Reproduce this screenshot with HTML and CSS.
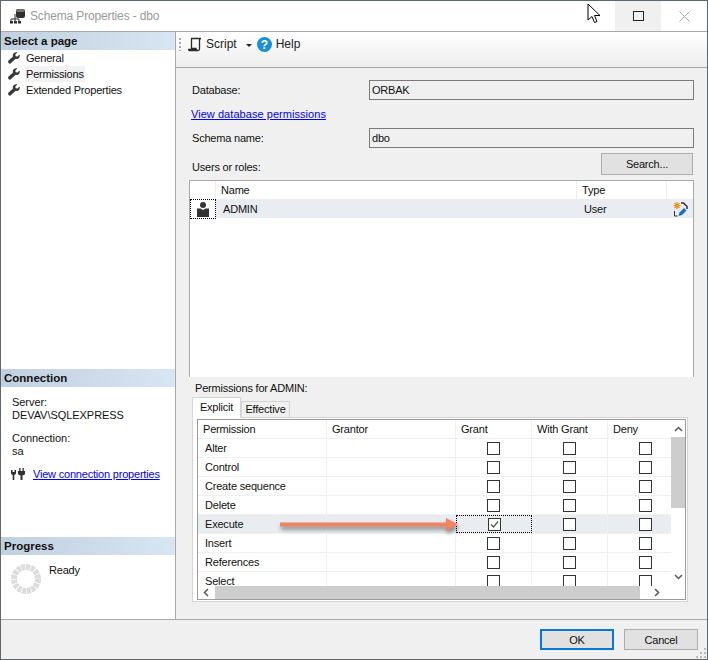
FILE: index.html
```html
<!DOCTYPE html>
<html lang="en">
<head>
<meta charset="utf-8">
<title>Schema Properties - dbo</title>
<link rel="stylesheet" href="styles.css">
</head>
<body>
<svg width="0" height="0" class="defs">
  <symbol id="wrench" viewBox="0 0 12 12"><path d="M11.6 2.6 9.4 4.6 7.7 4.2 7.3 2.5 9.4.4C7.6-.2 5.6.6 5 2.2c-.3.8-.3 1.6 0 2.2L.6 8.6c-.7.7-.7 1.8 0 2.5s1.8.7 2.5 0L7.400 6.900c.8.3 1.700.3 2.500-.1 1.500-.7 2.200-2.500 1.700-4.200z" fill="#3a3a3a"/></symbol>
  <symbol id="box" viewBox="0 0 13 13"><rect x=".5" y=".5" width="12" height="12" fill="#fff" stroke="#333"/></symbol>
</svg>
<div class="window">
  <header class="titlebar">
    <svg class="appicon" width="16" height="16" viewBox="0 0 16 16"><rect x="6" y="1" width="9" height="9" rx="2" fill="#2f2f2f"/><ellipse cx="10.500" cy="2.500" rx="4.500" ry="1.600" fill="#777"/><path d="M5 6v3M1 11h8M1 11v2M5 9v4M9 11v2" stroke="#2f2f2f" fill="none"/><rect x="0" y="13" width="3" height="2.500" fill="#2f2f2f"/><rect x="4" y="13" width="3" height="2.500" fill="#2f2f2f"/><rect x="8" y="13" width="3" height="2.500" fill="#2f2f2f"/></svg>
    <span class="title">Schema Properties - dbo</span>
    <div class="winbtns">
      <div class="winbtn hover"><span class="maxbox"></span></div>
      <div class="winbtn"><svg width="11" height="11" viewBox="0 0 11 11"><path d="M.5.5l10 10M10.500.5l-10 10" stroke="#a8a8a8" fill="none"/></svg></div>
    </div>
  </header>
  <div class="main">
    <aside class="sidebar">
      <section class="pages">
        <h2 class="panel-head">Select a page</h2>
        <ul class="pagelist">
          <li class="pageitem"><svg class="wrench"><use href="#wrench"/></svg><span>General</span></li>
          <li class="pageitem"><svg class="wrench"><use href="#wrench"/></svg><span class="selected">Permissions</span></li>
          <li class="pageitem"><svg class="wrench"><use href="#wrench"/></svg><span>Extended Properties</span></li>
        </ul>
      </section>
      <section class="connection">
        <h2 class="panel-head">Connection</h2>
        <div class="conn-body">
          <p class="conn-text">Server:</p>
          <p class="conn-text">DEVAV\SQLEXPRESS</p>
          <p class="conn-text conn-second">Connection:</p>
          <p class="conn-text">sa</p>
          <div class="conn-link">
            <svg class="plug" width="14" height="12" viewBox="0 0 14 12"><path d="M0 2h1.500v2h2V2H5v3c0 1-.8 1.800-1.700 1.800V12H1.700V6.800C.8 6.800 0 6 0 5z" fill="#2f2f2f"/><path d="M7 3h7v2.500c0 1-1 1.800-2.500 1.800V12H9.500V7.300C8 7.300 7 6.500 7 5.500zM8.200 0h1.300v3H8.200zM11.500 0h1.300v3h-1.300z" fill="#2f2f2f"/></svg>
            <a href="#">View connection properties</a>
          </div>
        </div>
      </section>
      <section class="progress">
        <h2 class="panel-head">Progress</h2>
        <div class="progress-body">
          <svg width="30" height="30" viewBox="0 0 30 30"><circle cx="15" cy="15" r="12" fill="none" stroke="#dcdcdc" stroke-width="6" stroke-dasharray="3.900 .8"/></svg>
          <span>Ready</span>
        </div>
      </section>
    </aside>
    <div class="pane">
      <div class="toolbar">
        <span class="grip"></span>
        <svg class="tool-script" width="14" height="15" viewBox="0 0 14 15"><path d="M3.500 1.500h9.500c-1 0-1.500.7-1.500 1.500v9c0 1-.8 1.500-1.500 1.500H1.500c-.7 0-1-.5-1-1h8c0-.8 0-1 .2-1H3.500z" fill="none" stroke="#2b2b2b" stroke-width="1.300"/></svg>
        <span class="tool-label">Script</span>
        <span class="caret"></span>
        <svg class="tool-help" width="15" height="15" viewBox="0 0 15 15"><circle cx="7.500" cy="7.500" r="7.500" fill="#1a8fd8"/><text x="7.500" y="12" class="helpq" text-anchor="middle">?</text></svg>
        <span class="tool-label">Help</span>
      </div>
      <div class="content">
        <div class="field first">
          <label class="field-label">Database:</label>
          <div class="readonly">ORBAK</div>
        </div>
        <a class="dblink" href="#">View database permissions</a>
        <div class="field">
          <label class="field-label">Schema name:</label>
          <div class="readonly">dbo</div>
        </div>
        <div class="users-row">
          <span>Users or roles:</span>
          <button class="btn search">Search...</button>
        </div>
        <div class="users">
          <div class="users-head">
            <span class="u0"></span><span class="u1">Name</span><span class="u2">Type</span><span class="u3"></span>
          </div>
          <div class="users-row-data">
            <span class="u0 focus-cell">
              <svg width="12" height="15" viewBox="0 0 12 15"><circle cx="6" cy="3" r="3" fill="#333"/><path d="M0 6.500h3.500L6 8l2.500-1.500H12V15H0z" fill="#333"/></svg>
            </span>
            <span class="u1 indent">ADMIN</span>
            <span class="u2 indent">User</span>
            <span class="u3 iconcell">
              <svg width="15" height="15" viewBox="0 0 15 15"><path d="M8 1h2.500L14 4.500V7" fill="none" stroke="#333" stroke-width="1.500"/><path d="M1.500 9v5h3" fill="none" stroke="#333"/><path d="M5.500 14l1-3.500 4.500-4.500 2.500 2.500-4.500 4.500z" fill="#1d6fc4"/><path d="M4 0v7M.5 3.500h7M1.500 1l5 5M6.500 1l-5 5" stroke="#e8921e" stroke-width="1.200"/></svg>
            </span>
          </div>
        </div>
        <div class="perm-label">Permissions for ADMIN:</div>
        <div class="tabs">
          <span class="tab active">Explicit</span>
          <span class="tab">Effective</span>
        </div>
        <div class="tabpanel">
          <div class="grid-frame">
            <div class="grid-top">
              <div class="grid-clip">
                <div class="g-row g-head"><span>Permission</span><span>Grantor</span><span>Grant</span><span>With Grant</span><span>Deny</span></div>
                <div class="g-row"><span class="g-name">Alter</span><span></span><span class="g-c"><svg class="box"><use href="#box"/></svg></span><span class="g-c"><svg class="box"><use href="#box"/></svg></span><span class="g-c"><svg class="box"><use href="#box"/></svg></span></div>
                <div class="g-row"><span class="g-name">Control</span><span></span><span class="g-c"><svg class="box"><use href="#box"/></svg></span><span class="g-c"><svg class="box"><use href="#box"/></svg></span><span class="g-c"><svg class="box"><use href="#box"/></svg></span></div>
                <div class="g-row"><span class="g-name">Create sequence</span><span></span><span class="g-c"><svg class="box"><use href="#box"/></svg></span><span class="g-c"><svg class="box"><use href="#box"/></svg></span><span class="g-c"><svg class="box"><use href="#box"/></svg></span></div>
                <div class="g-row"><span class="g-name">Delete</span><span></span><span class="g-c"><svg class="box"><use href="#box"/></svg></span><span class="g-c"><svg class="box"><use href="#box"/></svg></span><span class="g-c"><svg class="box"><use href="#box"/></svg></span></div>
                <div class="g-row g-sel"><span class="g-name">Execute</span><span></span><span class="g-c g-focus"><svg class="box" viewBox="0 0 13 13"><rect x=".5" y=".5" width="12" height="12" fill="#fff" stroke="#333"/><path d="M3 6.500l2.500 2.500L10 3.500" fill="none" stroke="#555" stroke-width="1.200"/></svg></span><span class="g-c"><svg class="box"><use href="#box"/></svg></span><span class="g-c"><svg class="box"><use href="#box"/></svg></span></div>
                <div class="g-row"><span class="g-name">Insert</span><span></span><span class="g-c"><svg class="box"><use href="#box"/></svg></span><span class="g-c"><svg class="box"><use href="#box"/></svg></span><span class="g-c"><svg class="box"><use href="#box"/></svg></span></div>
                <div class="g-row"><span class="g-name">References</span><span></span><span class="g-c"><svg class="box"><use href="#box"/></svg></span><span class="g-c"><svg class="box"><use href="#box"/></svg></span><span class="g-c"><svg class="box"><use href="#box"/></svg></span></div>
                <div class="g-row"><span class="g-name">Select</span><span></span><span class="g-c"><svg class="box"><use href="#box"/></svg></span><span class="g-c"><svg class="box"><use href="#box"/></svg></span><span class="g-c"><svg class="box"><use href="#box"/></svg></span></div>
              </div>
              <div class="vscroll">
                <svg class="sb-arrow" width="9" height="6" viewBox="0 0 9 6"><path d="M1 5l3.500-3.500L8 5" fill="none" stroke="#555" stroke-width="1.500"/></svg>
                <div class="v-thumb"></div>
                <svg class="sb-arrow" width="9" height="6" viewBox="0 0 9 6"><path d="M1 1l3.500 3.500L8 1" fill="none" stroke="#555" stroke-width="1.500"/></svg>
              </div>
            </div>
            <div class="hscroll">
              <svg class="sb-arrow" width="6" height="9" viewBox="0 0 6 9"><path d="M5 1L1.500 4.500 5 8" fill="none" stroke="#555" stroke-width="1.500"/></svg>
              <div class="h-thumb"></div>
              <svg class="sb-arrow" width="6" height="9" viewBox="0 0 6 9"><path d="M1 1l3.500 3.500L1 8" fill="none" stroke="#555" stroke-width="1.500"/></svg>
              <span class="h-corner"></span>
            </div>
          </div>
        </div>
      </div>
    </div>
  </div>
  <footer class="footer">
    <button class="btn primary">OK</button>
    <button class="btn cancel">Cancel</button>
    <svg class="sizegrip" width="11" height="11" viewBox="0 0 11 11"><path d="M8 0h2v2H8zM4 4h2v2H4zM8 4h2v2H8zM0 8h2v2H0zM4 8h2v2H4zM8 8h2v2H8z" fill="#b8b8b8"/></svg>
  </footer>
  <svg class="annot-arrow" width="178" height="13" viewBox="0 0 178 13"><path d="M0 4.500h166V0l12 6.500-12 6.500V8.500H0z" fill="#f08360"/></svg>
  <svg class="cursor" width="14" height="21" viewBox="0 0 14 21"><path d="M1 1v16l4-3.500 2.500 6 2.500-1-2.500-6H13z" fill="#fff" stroke="#000"/></svg>
</div>
</body>
</html>
```
FILE: styles.css
```css
* { box-sizing: border-box; }
html, body { margin: 0; padding: 0; }
body { width: 708px; height: 660px; overflow: hidden; font-family: "Liberation Sans", Arial, sans-serif; font-size: 11px; letter-spacing: -.2px; line-height: 16px; color: #111; }
.defs { position: absolute; }
a { color: #0000ee; text-decoration: underline; white-space: nowrap; }
.window { position: relative; width: 708px; height: 660px; display: flex; flex-direction: column; background: #f0f0f0; border: 1px solid #5f666c; }

.titlebar { flex: 0 0 30px; display: flex; align-items: center; background: #fff; padding-left: 9px; }
.appicon { margin-right: 4px; margin-top: -1px; }
.title { font-size: 12px; letter-spacing: -.15px; color: #9a9a9a; }
.winbtns { margin-left: auto; display: flex; height: 100%; }
.winbtn { width: 46px; height: 30px; display: flex; align-items: center; justify-content: center; }
.winbtn.hover { background: #f0f0f0; }
.maxbox { width: 11px; height: 10px; border: 1px solid #222; display: block; }

.main { flex: 1 1 auto; display: flex; border-top: 1px solid #a8a8a8; min-height: 0; }
.sidebar { flex: 0 0 175px; background: #fff; border-right: 1px solid #a8a8a8; display: flex; flex-direction: column; }
.panel-head { margin: 0; height: 18px; padding-left: 3px; font-size: 11.5px; letter-spacing: 0; line-height: 18px; font-weight: 700; color: #111; background: linear-gradient(90deg, #c1d0df, #d8e5f2); }
.pages { flex: 0 0 337px; }
.pagelist { list-style: none; margin: 0; padding: 0 0 0 7px; }
.pageitem { display: flex; align-items: center; height: 16px; }
.wrench { width: 12px; height: 12px; margin-right: 6px; flex: none; }
.selected { background: #f2f2f2; padding: 0 1px 0 1px; margin-left: -1px; }
.connection { flex: 0 0 168px; }
.conn-body { padding: 9px 0 0 11px; }
.conn-text { margin: 0; height: 13px; line-height: 13px; letter-spacing: -.05px; }
.conn-second { margin-top: 10px; }
.conn-link { display: flex; align-items: center; margin: 8px 0 0 -1px; gap: 8px; height: 16px; }
.plug { flex: none; }
.progress-body { display: flex; align-items: flex-start; padding: 9px 0 0 10px; gap: 8px; }
.progress-body span { margin-top: -2px; }

.pane { flex: 1 1 auto; display: flex; flex-direction: column; min-width: 0; }
.toolbar { flex: 0 0 36px; display: flex; align-items: center; padding: 0 0 11px 3px; background: linear-gradient(#fff, #ededed); border-bottom: 1px solid #a8a8a8; font-size: 12px; letter-spacing: 0; }
.grip { width: 2px; height: 13px; background: repeating-linear-gradient(#aaa 0 2px, transparent 2px 4px); margin-right: 7px; }
.tool-script { margin-right: 4px; }
.tool-label { color: #222; }
.caret { width: 0; height: 0; border: 3px solid transparent; border-top-color: #222; border-bottom: 0; margin: 2px 5px 0 9px; }
.tool-help { margin-right: 4px; }
.helpq { font-size: 12px; font-weight: 700; fill: #fff; }

.content { flex: 1 1 auto; padding: 12px 13px 0 13px; display: flex; flex-direction: column; align-items: stretch; min-height: 0; }
.field { display: flex; align-items: center; height: 20px; margin-top: 6px; padding-left: 3px; }
.field.first { margin-top: 0; }
.field-label { width: 177px; flex: none; }
.readonly { flex: 1 1 auto; height: 20px; border: 1px solid #7a7a7a; background: #f0f0f0; line-height: 18px; padding-left: 2px; }
.dblink { margin: 6px 0 0 2px; align-self: flex-start; letter-spacing: .05px; }
.users-row { display: flex; align-items: flex-end; justify-content: space-between; height: 22px; margin-top: 5px; padding: 0 1px 0 3px; }
.btn { font: inherit; letter-spacing: inherit; color: #111; background: #e1e1e1; border: 1px solid #adadad; padding: 0; }
.search { width: 92px; height: 22px; }
.users { height: 197px; margin-top: 5px; background: #fff; border: 1px solid #a8a8a8; border-bottom: 0; }
.users-head, .users-row-data { display: grid; grid-template-columns: 26px 361px 90px 1fr; }
.users-head { height: 18px; line-height: 18px; }
.users-head span { border-right: 1px solid #eee; padding-left: 5px; }
.users-head span:last-child { border-right: 0; }
.users-row-data { height: 19px; line-height: 20px; background: #e9edf1; }
.focus-cell { display: flex; align-items: center; justify-content: center; background: #fff; border: 1px dotted #000; }
.indent { padding-left: 7px; }
.iconcell { display: flex; align-items: center; justify-content: center; }
.perm-label { margin: 3px 0 0 6px; height: 16px; }
.tabs { display: flex; align-items: flex-end; height: 21px; margin: 1px 0 -1px 3px; position: relative; z-index: 1; }
.tab { height: 17px; line-height: 15px; padding: 0 3px; width: 49px; background: #f0f0f0; border: 1px solid #d4d4d4; text-align: center; }
.tab.active { height: 21px; line-height: 18px; background: #fff; border-bottom-color: #fff; }
.tabpanel { height: 185px; margin: 0 6px 0 3px; background: #fff; border: 1px solid #d4d4d4; padding: 1px 1px 1px 4px; }
.grid-frame { height: 181px; border: 1px solid #9a9a9a; }
.grid-top { display: flex; height: 166px; background: #fff; }
.grid-clip { width: 473px; height: 166px; overflow: hidden; flex: none; }
.g-row { display: grid; grid-template-columns: 129px 129px 76px 76px 76px; height: 19px; line-height: 18px; border-bottom: 1px solid #f0f0f0; }
.g-row > span { border-right: 1px solid #f0f0f0; padding-left: 5px; }
.g-row .g-name { padding-left: 7px; }
.g-sel { background: #e9edf1; }
.g-row .g-c { padding: 0; display: flex; align-items: center; justify-content: center; }
.g-row .g-focus { border: 1px dotted #000; }
.box { width: 13px; height: 13px; display: block; }
.vscroll { flex: 1 1 auto; background: #fff; display: flex; flex-direction: column; align-items: center; }
.sb-arrow { flex: none; }
.vscroll .sb-arrow:first-child { margin: 6px 0 5px; }
.v-thumb { align-self: stretch; height: 71px; background: #cdcdcd; margin-bottom: auto; }
.vscroll .sb-arrow:last-child { margin-bottom: 6px; }
.hscroll { height: 13px; display: flex; align-items: center; background: #fff; padding-left: 5px; }
.h-thumb { width: 425px; height: 13px; background: #cdcdcd; margin: 0 14px 0 6px; }
.h-corner { flex: 1 1 auto; }

.footer { flex: 0 0 40px; display: flex; align-items: flex-start; border-top: 1px solid #a8a8a8; padding: 9px 0 0 539px; gap: 10px; position: relative; }
.footer .btn { width: 74px; height: 21px; }
.btn.primary { border: 2px solid #0a78d0; }
.sizegrip { position: absolute; right: 0; bottom: 0; }
.annot-arrow { position: absolute; left: 279px; top: 517px; filter: drop-shadow(1px 3px 2px rgba(0,0,0,.45)); }
.cursor { position: absolute; left: 586px; top: 2px; }
```
